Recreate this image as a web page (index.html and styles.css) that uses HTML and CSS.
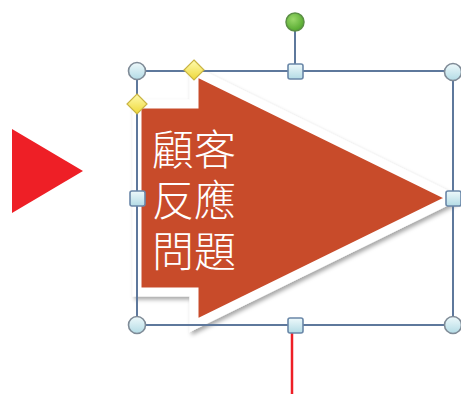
FILE: index.html
```html
<!DOCTYPE html>
<html lang="zh-Hant">
<head>
<meta charset="utf-8">
<link rel="stylesheet" href="styles.css">
</head>
<body>
<div class="canvas">
  <svg class="pointer" width="461" height="394" viewBox="0 0 461 394">
    <polygon points="12,129 83,171 12,213" fill="#ee1f26"/>
  </svg>
  <svg class="diagram" width="461" height="394" viewBox="0 0 461 394">
    <defs>
      <filter id="sh" x="-10%" y="-10%" width="130%" height="130%">
        <feDropShadow dx="2" dy="3" stdDeviation="2" flood-color="#000" flood-opacity="0.35"/>
      </filter>
      <linearGradient id="hc" x1="0" y1="0" x2="0" y2="1">
        <stop offset="0" stop-color="#eef9fb"/>
        <stop offset="1" stop-color="#b3dbe5"/>
      </linearGradient>
      <linearGradient id="hy" x1="0" y1="0" x2="0" y2="1">
        <stop offset="0" stop-color="#fffbb0"/>
        <stop offset="1" stop-color="#eed838"/>
      </linearGradient>
      <radialGradient id="hg" cx="0.4" cy="0.35" r="0.7">
        <stop offset="0" stop-color="#9ad86a"/>
        <stop offset="1" stop-color="#4fa52a"/>
      </radialGradient>
    </defs>
    <polygon class="arrow" filter="url(#sh)" points="137,104 194,104 194,71 453,198 194,325 194,292 137,292"/>
    <line class="red-line" x1="292" y1="326" x2="292" y2="394"/>
    <rect class="box" x="137" y="71" width="316" height="254"/>
    <line class="box" x1="295" y1="30" x2="295" y2="64"/>
    <circle class="rot" cx="295" cy="22" r="9"/>
    <circle class="corner" cx="137" cy="71" r="8.5"/>
    <circle class="corner" cx="453" cy="72" r="8.5"/>
    <circle class="corner" cx="137" cy="325" r="8.5"/>
    <circle class="corner" cx="453" cy="325" r="8.5"/>
    <rect class="side" x="288" y="64" width="15" height="15" rx="2"/>
    <rect class="side" x="130" y="191" width="15" height="15" rx="2"/>
    <rect class="side" x="446" y="191" width="15" height="15" rx="2"/>
    <rect class="side" x="288" y="318" width="15" height="15" rx="2"/>
    <polygon class="adj" points="194,60 204,70 194,80 184,70"/>
    <polygon class="adj" points="137,94 147,104 137,114 127,104"/>
  </svg>
  <div class="label">顧客<br>反應<br>問題</div>
</div>
</body>
</html>
```

FILE: styles.css
```css
html, body {
  margin: 0;
  padding: 0;
  background: #ffffff;
}
.canvas {
  position: relative;
  width: 461px;
  height: 394px;
  overflow: hidden;
}
.pointer, .diagram {
  position: absolute;
  left: 0;
  top: 0;
}
.arrow {
  fill: #c84c2c;
  stroke: #ffffff;
  stroke-width: 9;
  stroke-linejoin: miter;
}
.box {
  fill: none;
  stroke: #5e789c;
  stroke-width: 2;
}
.red-line {
  stroke: #ee1f26;
  stroke-width: 2.5;
}
.rot {
  fill: url(#hg);
  stroke: #5b8f45;
  stroke-width: 1.5;
}
.corner {
  fill: url(#hc);
  stroke: #7f8b97;
  stroke-width: 1.6;
}
.side {
  fill: url(#hc);
  stroke: #6a87a8;
  stroke-width: 1.6;
}
.adj {
  fill: url(#hy);
  stroke: #c9b443;
  stroke-width: 1.2;
}
.label {
  position: absolute;
  left: 152px;
  top: 121px;
  font-family: "Noto Sans CJK TC", "Noto Sans CJK SC", sans-serif;
  font-weight: 300;
  font-size: 42px;
  line-height: 51px;
  color: #ffffff;
  letter-spacing: 0;
}
```
